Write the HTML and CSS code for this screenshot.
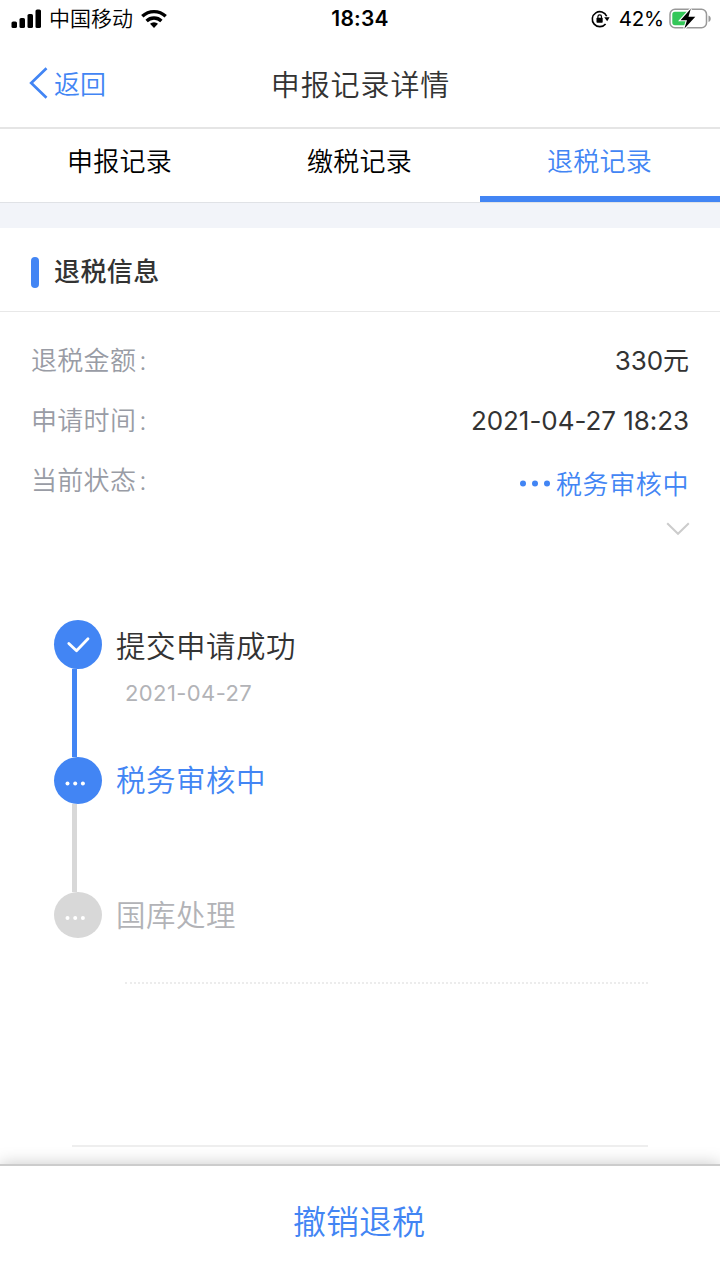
FILE: index.html
```html
<!DOCTYPE html>
<html lang="zh-CN">
<head>
  <meta charset="UTF-8">
  <meta name="viewport" content="width=device-width, initial-scale=1.0">
  <title>申报记录详情</title>
  <link rel="stylesheet" href="styles.css">
</head>
<body>
  <div class="status-bar">
    <div class="status-left">
      <svg class="signal" width="31" height="19" viewBox="0 0 31 19">
        <rect x="0.5" y="12.5" width="5.5" height="6.5" rx="1.6"/>
        <rect x="8.5" y="9" width="5.5" height="10" rx="1.6"/>
        <rect x="16.5" y="5" width="5.5" height="14" rx="1.6"/>
        <rect x="24.5" y="0.5" width="5.5" height="18.5" rx="1.6"/>
      </svg>
      <span class="carrier">中国移动</span>
      <svg class="wifi" width="26" height="19" viewBox="0 0 26 19" fill="none" stroke="#000" stroke-width="3.3">
        <path d="M1.3 7.3a16.8 16.8 0 0 1 23.4 0"/>
        <path d="M5.6 12a10.6 10.6 0 0 1 14.8 0"/>
        <path d="M13 19l-4-4.2a5.8 5.8 0 0 1 8 0z" fill="#000" stroke="none"/>
      </svg>
    </div>
    <div class="time">18:34</div>
    <div class="status-right">
      <svg class="lock" width="19" height="18" viewBox="0 0 19 18">
        <path d="M15.7 6.2A7.5 7.5 0 1 0 14.6 13.9" fill="none" stroke="#000" stroke-width="1.6"/>
        <path d="M13.2 7.3h5.4l-2.4 4z"/>
        <rect x="5.5" y="7.8" width="6.2" height="5" rx="0.7"/>
        <path d="M6.9 8.5V6.7a1.8 1.8 0 0 1 3.6 0v1.8" fill="none" stroke="#000" stroke-width="1.2"/>
      </svg>
      <span class="percent">42%</span>
      <svg class="battery" width="43" height="22" viewBox="0 0 43 22">
        <rect x="1" y="1.2" width="36.5" height="18.5" rx="5" fill="#fff" stroke="#999" stroke-width="1.5"/>
        <path d="M39.5 7.5c3 .8 3 5.7 0 6.5z" fill="#999"/>
        <path d="M6 3.7h13v13.5H6a2.7 2.7 0 0 1-2.7-2.7V6.4A2.7 2.7 0 0 1 6 3.7z" fill="#34c759"/>
        <path d="M21.8 .8L11.5 12.200h6.500L15.300 20.800l11-12h-6.800z" stroke="#fff" stroke-width="2.2" paint-order="stroke"/>
      </svg>
    </div>
  </div>

  <header class="nav">
    <a class="back">
      <svg width="19" height="32" viewBox="0 0 19 32" fill="none" stroke="#4285f4" stroke-width="2.7">
        <path d="M17.5 1.3L2.2 16l15.3 14.7"/>
      </svg>
      <span>返回</span>
    </a>
    <h1>申报记录详情</h1>
  </header>

  <nav class="tabs">
    <a class="tab">申报记录</a>
    <a class="tab">缴税记录</a>
    <a class="tab active">退税记录</a>
  </nav>

  <section class="info">
    <h2>退税信息</h2>
    <div class="rows">
      <div class="row">
        <span class="label">退税金额<i>:</i></span>
        <span class="value">330元</span>
      </div>
      <div class="row">
        <span class="label">申请时间<i>:</i></span>
        <span class="value">2021-04-27 18:23</span>
      </div>
      <div class="row">
        <span class="label">当前状态<i>:</i></span>
        <span class="value state">
          <svg width="32" height="12" viewBox="0 0 32 12" fill="#4285f4">
            <circle cx="4" cy="4.5" r="3"/>
            <circle cx="16" cy="4.5" r="3"/>
            <circle cx="28" cy="4.5" r="3"/>
          </svg>
          <span>税务审核中</span>
        </span>
      </div>
    </div>
    <svg class="arrow" width="24" height="14" viewBox="0 0 24 14" fill="none" stroke="#ccc" stroke-width="2">
      <path d="M1.2 1.2L12 11.8 22.8 1.2"/>
    </svg>
  </section>

  <section class="timeline">
    <div class="step done">
      <div class="marker">
        <div class="dot">
          <svg width="48" height="48" viewBox="0 0 48 48" fill="none" stroke="#fff" stroke-width="2.8" stroke-linecap="round" stroke-linejoin="round">
            <path d="M14.8 23.5l7.700 7.200L34 18.800"/>
          </svg>
        </div>
        <div class="line"></div>
      </div>
      <div class="text">
        <h3>提交申请成功</h3>
        <p>2021-04-27</p>
      </div>
    </div>
    <div class="step current">
      <div class="marker">
        <div class="dot">
          <svg width="48" height="47" viewBox="0 0 48 47" fill="#fff">
            <circle cx="13.5" cy="26.5" r="2"/>
            <circle cx="21.2" cy="26.5" r="2"/>
            <circle cx="28.9" cy="26.5" r="2"/>
          </svg>
        </div>
        <div class="line"></div>
      </div>
      <div class="text">
        <h3>税务审核中</h3>
      </div>
    </div>
    <div class="step">
      <div class="marker">
        <div class="dot">
          <svg width="48" height="46" viewBox="0 0 48 46" fill="#fff">
            <circle cx="13.5" cy="26" r="2"/>
            <circle cx="21.2" cy="26" r="2"/>
            <circle cx="28.9" cy="26" r="2"/>
          </svg>
        </div>
      </div>
      <div class="text">
        <h3>国库处理</h3>
      </div>
    </div>
    <div class="dotted"></div>
  </section>

  <footer>
    <button class="cancel">撤销退税</button>
  </footer>
</body>
</html>
```
FILE: styles.css
```css
* {
  box-sizing: border-box;
}
body {
  margin: 0;
  height: 1280px;
  display: flex;
  flex-direction: column;
  overflow: hidden;
  font-family: Inter, "Noto Sans CJK SC", sans-serif;
  font-weight: 350;
  background-color: #fff;
  color: #333;
}
h1, h2, h3, p {
  margin: 0;
  font-weight: 350;
}
svg {
  display: block;
  flex: none;
}

/* status bar */
.status-bar {
  display: grid;
  grid-template-columns: 1fr auto 1fr;
  align-items: center;
  height: 38px;
  padding: 0 8px 0 11px;
  color: #000;
  font-size: 21px;
}
.status-left, .status-right {
  display: flex;
  align-items: center;
}
.status-left {
  padding-bottom: 1px;
}
.status-right {
  justify-content: flex-end;
  padding-bottom: 1px;
}
.carrier {
  margin: 0 8px 0 7px;
  line-height: 36px;
}
.time {
  margin-right: 3px;
  padding-bottom: 2px;
  font-weight: 600;
  letter-spacing: 0.2px;
}
.percent {
  margin: 0 5px 0 9px;
  font-size: 20.5px;
  font-weight: 400;
  letter-spacing: -0.2px;
}

/* title */
.nav {
  display: grid;
  grid-template-columns: 1fr auto 1fr;
  align-items: center;
  height: 91px;
  border-bottom: 2px solid #e5e5e5;
}
.back {
  display: flex;
  align-items: center;
  gap: 6px;
  padding-left: 29px;
  color: #4285f4;
  font-size: 26px;
}
.nav h1 {
  font-size: 29px;
  letter-spacing: 0.9px;
  padding: 1px 0 0 1px;
}

/* tabs */
.tabs {
  display: flex;
  height: 74px;
  border-bottom: 1px solid #e0e2e6;
}
.tab {
  flex: 1;
  padding: 0 1px 4px 0;
  font-size: 26px;
  line-height: 65px;
  text-align: center;
  letter-spacing: 0.2px;
  color: #000;
}
.tab.active {
  color: #4285f4;
  border-bottom: 6px solid #4285f4;
}

/* refund info */
.info {
  border-top: 25px solid #f2f4f9;
}
.info h2 {
  display: flex;
  align-items: center;
  gap: 15px;
  height: 84px;
  padding: 0 0 0 31px;
  border-bottom: 1px solid #e8e8e8;
  font-size: 26px;
  font-weight: 500;
  letter-spacing: 0.4px;
}
.info h2::before {
  content: "";
  width: 8px;
  height: 31px;
  margin-top: 6px;
  border-radius: 4px;
  background-color: #4285f4;
}
.rows {
  padding: 19px 31px 0;
  font-size: 26px;
}
.row {
  display: flex;
  justify-content: space-between;
  height: 60px;
  line-height: 60px;
}
.label {
  color: #999ca5;
  letter-spacing: 0.3px;
}
.label i {
  margin-left: 3px;
  font-style: normal;
}
.value {
  font-weight: 400;
  letter-spacing: -0.05px;
}
.state {
  display: flex;
  align-items: center;
  gap: 5px;
  padding-top: 7px;
  color: #4285f4;
  font-weight: 350;
  letter-spacing: 0.6px;
}
.arrow {
  margin: 11px 30px 0 auto;
}

/* progress */
.timeline {
  flex: 1;
  margin: 0 72px;
  padding-top: 84px;
  border-bottom: 2px solid #eee;
}
.step {
  display: flex;
  gap: 14px;
  height: 135px;
  margin-left: -18px;
}
.step.done {
  height: 137px;
}
.marker {
  display: flex;
  flex-direction: column;
  width: 48px;
}
.dot {
  height: 46px;
  border-radius: 50%;
  background-color: #d8d8d8;
}
.line {
  flex: 1;
  width: 5px;
  margin-left: 18px;
  background-color: #d8d8d8;
}
.done .dot, .current .dot, .done .line {
  background-color: #4285f4;
}
.done .dot {
  height: 49px;
}
.current .dot {
  height: 47px;
}
.step h3 {
  font-size: 29.5px;
  line-height: 47px;
  letter-spacing: 0.5px;
  color: #b2b3b7;
}
.step.done h3 {
  line-height: 52px;
  color: #333;
}
.step.current h3 {
  color: #4285f4;
}
.step p {
  padding-left: 9px;
  font-size: 22px;
  font-weight: 400;
  line-height: 42px;
  letter-spacing: 0.4px;
  color: #b2b3b7;
}
.dotted {
  margin: -45px 0 0 53px;
  border-bottom: 2px dotted #ececec;
}

/* bottom button */
footer {
  height: 116px;
  margin-top: 17px;
  border-top: 2px solid #ccc;
  box-shadow: 0 0 16px rgba(0, 0, 0, 0.22);
}
.cancel {
  width: 100%;
  height: 100%;
  padding: 0 2px 6px 0;
  border: none;
  background: #fff;
  color: #4285f4;
  font-family: inherit;
  font-size: 33px;
  font-weight: 350;
}
```
